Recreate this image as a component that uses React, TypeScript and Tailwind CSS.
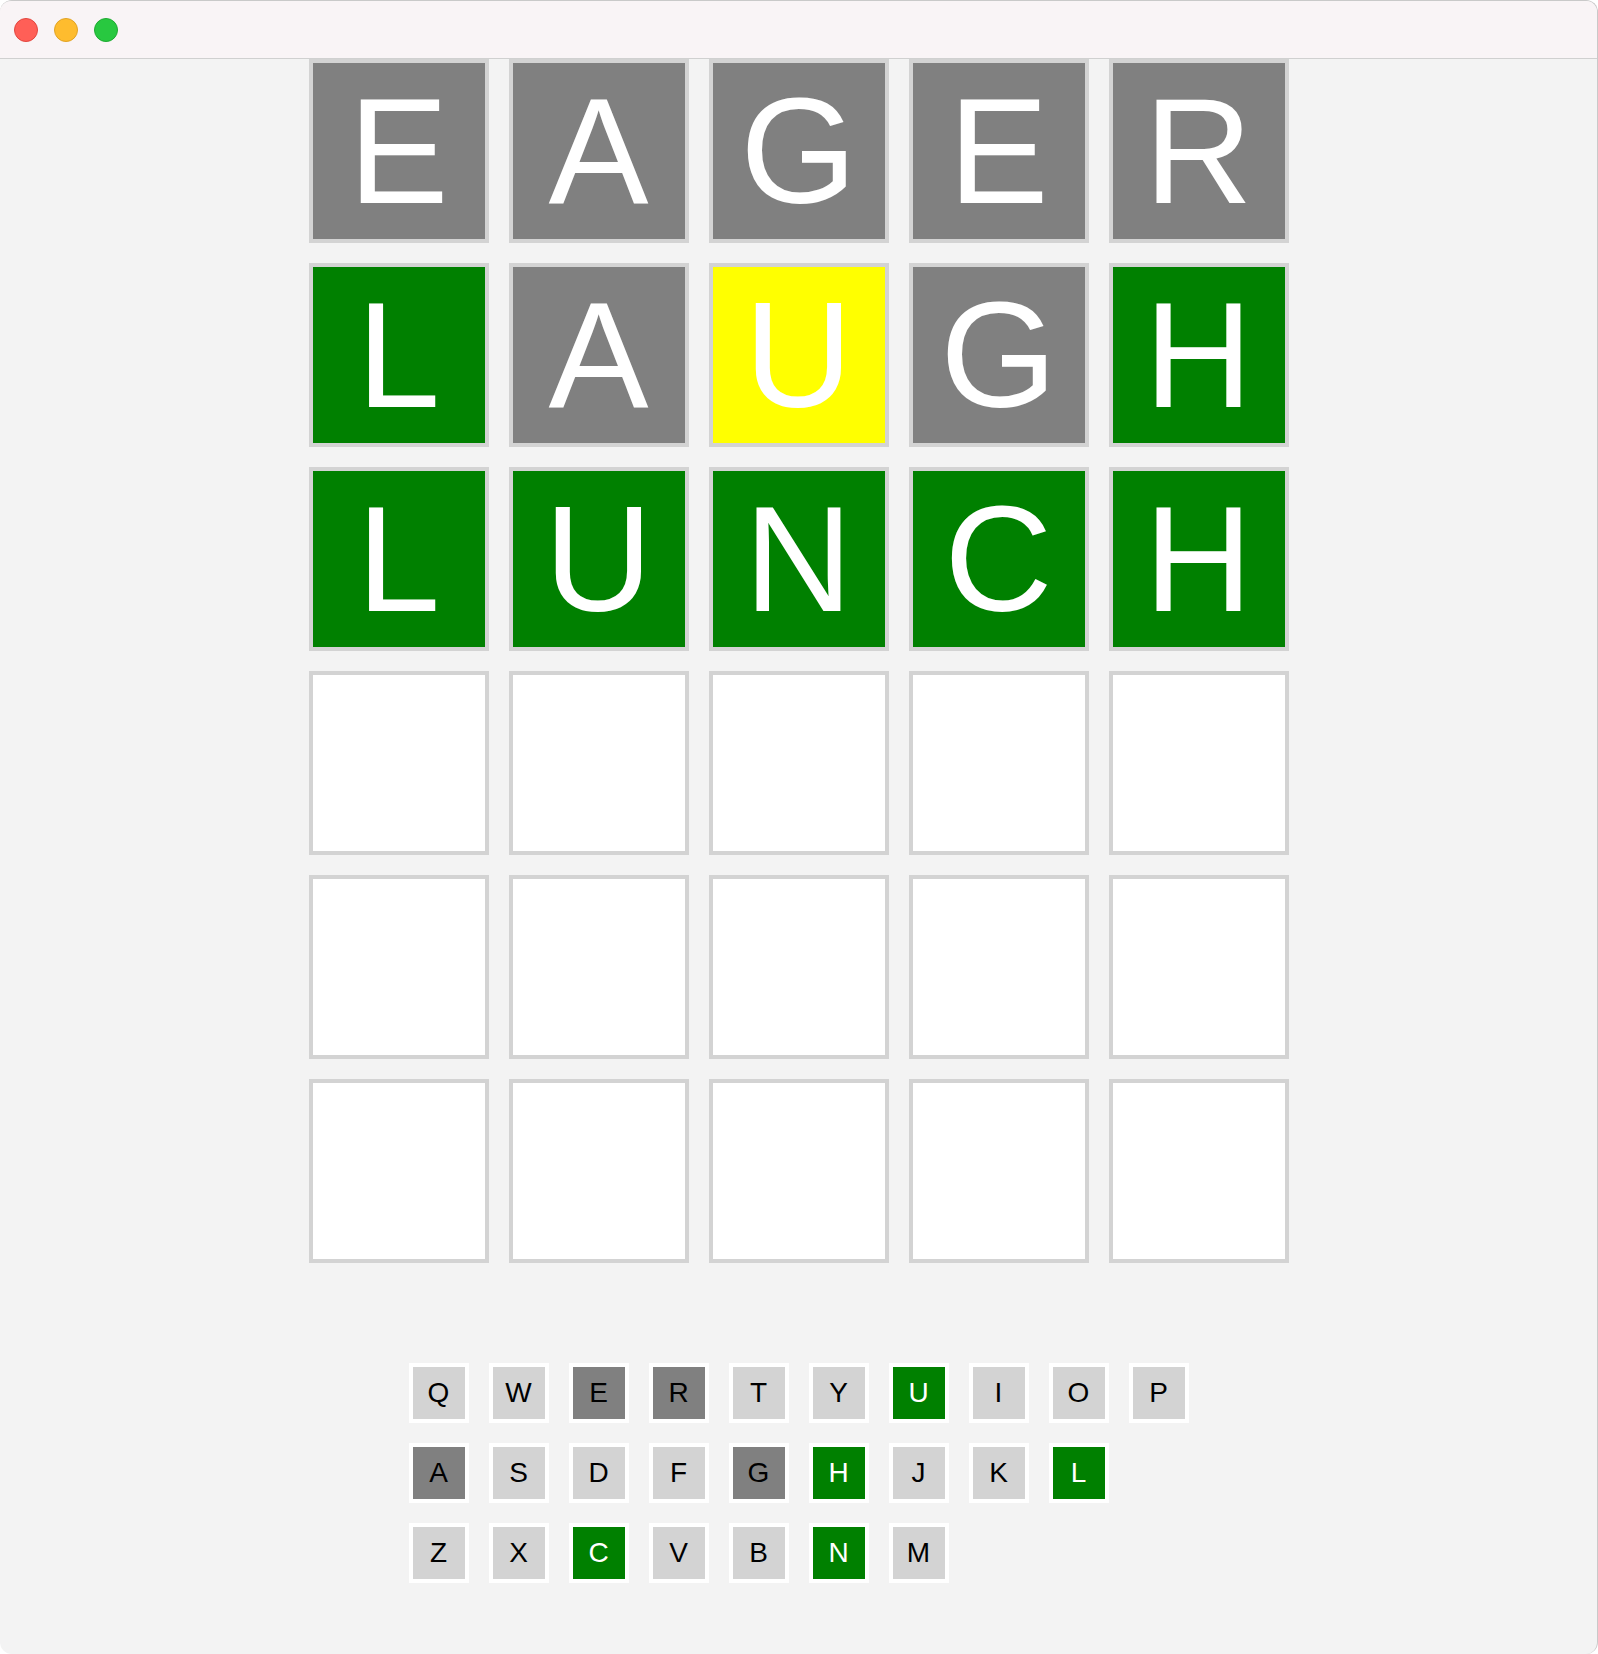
import React from "react";

type S = "g" | "y" | "x" | "e";

const rows: { l: string; s: S }[][] = [
  [
    { l: "E", s: "x" },
    { l: "A", s: "x" },
    { l: "G", s: "x" },
    { l: "E", s: "x" },
    { l: "R", s: "x" },
  ],
  [
    { l: "L", s: "g" },
    { l: "A", s: "x" },
    { l: "U", s: "y" },
    { l: "G", s: "x" },
    { l: "H", s: "g" },
  ],
  [
    { l: "L", s: "g" },
    { l: "U", s: "g" },
    { l: "N", s: "g" },
    { l: "C", s: "g" },
    { l: "H", s: "g" },
  ],
];

const tileBg: Record<S, string> = {
  g: "bg-[#008000]",
  y: "bg-[#ffff00]",
  x: "bg-[#808080]",
  e: "bg-white",
};

const keyRows = ["QWERTYUIOP", "ASDFGHJKL", "ZXCVBNM"];
const gray = new Set(["E", "R", "A", "G"]);
const green = new Set(["U", "H", "L", "C", "N"]);

function Tile({ l, s }: { l: string; s: S }) {
  return (
    <div
      className={`w-[180px] h-[184px] border-4 border-[#d3d3d3] ${tileBg[s]} flex items-center justify-center text-white text-[150px] leading-none`}
      style={{ fontFamily: '"Liberation Sans", Arial, sans-serif' }}
    >
      {l}
    </div>
  );
}

function Key({ k }: { k: string }) {
  const cls = gray.has(k)
    ? "bg-[#808080] text-black"
    : green.has(k)
    ? "bg-[#008000] text-white"
    : "bg-[#d3d3d3] text-black";
  return (
    <div
      className={`w-[60px] h-[60px] border-4 border-white ${cls} flex items-center justify-center text-[28px] leading-none`}
      style={{ fontFamily: '"Liberation Sans", Arial, sans-serif' }}
    >
      {k}
    </div>
  );
}

export default function App() {
  const all: { l: string; s: S }[][] = [...rows];
  while (all.length < 6) all.push(Array.from({ length: 5 }, () => ({ l: "", s: "e" as S })));
  return (
    <div className="w-[1598px] h-[1654px] bg-[#f3f3f3] overflow-hidden rounded-[12px] border-t border-r border-[#c9c9c9] flex flex-col">
      <div className="h-[58px] shrink-0 bg-[#f9f4f6] border-b border-[#d0d0d0] flex items-start pt-[17px] pl-[14px] gap-[16px]">
        <div className="w-[24px] h-[24px] rounded-full bg-[#ff5f57] border border-[#e2463f]" />
        <div className="w-[24px] h-[24px] rounded-full bg-[#febc2e] border border-[#e1a325]" />
        <div className="w-[24px] h-[24px] rounded-full bg-[#28c840] border border-[#1eaa32]" />
      </div>
      <div className="flex flex-col items-center">
        <div className="grid grid-cols-5 gap-[20px] w-[980px]">
          {all.map((r, i) =>
            r.map((t, j) => <Tile key={`${i}-${j}`} l={t.l} s={t.s} />)
          )}
        </div>
        <div className="mt-[100px] w-[780px] flex flex-col gap-[20px]">
          {keyRows.map((r) => (
            <div key={r} className="flex gap-[20px]">
              {r.split("").map((k) => (
                <Key key={k} k={k} />
              ))}
            </div>
          ))}
        </div>
      </div>
    </div>
  );
}
